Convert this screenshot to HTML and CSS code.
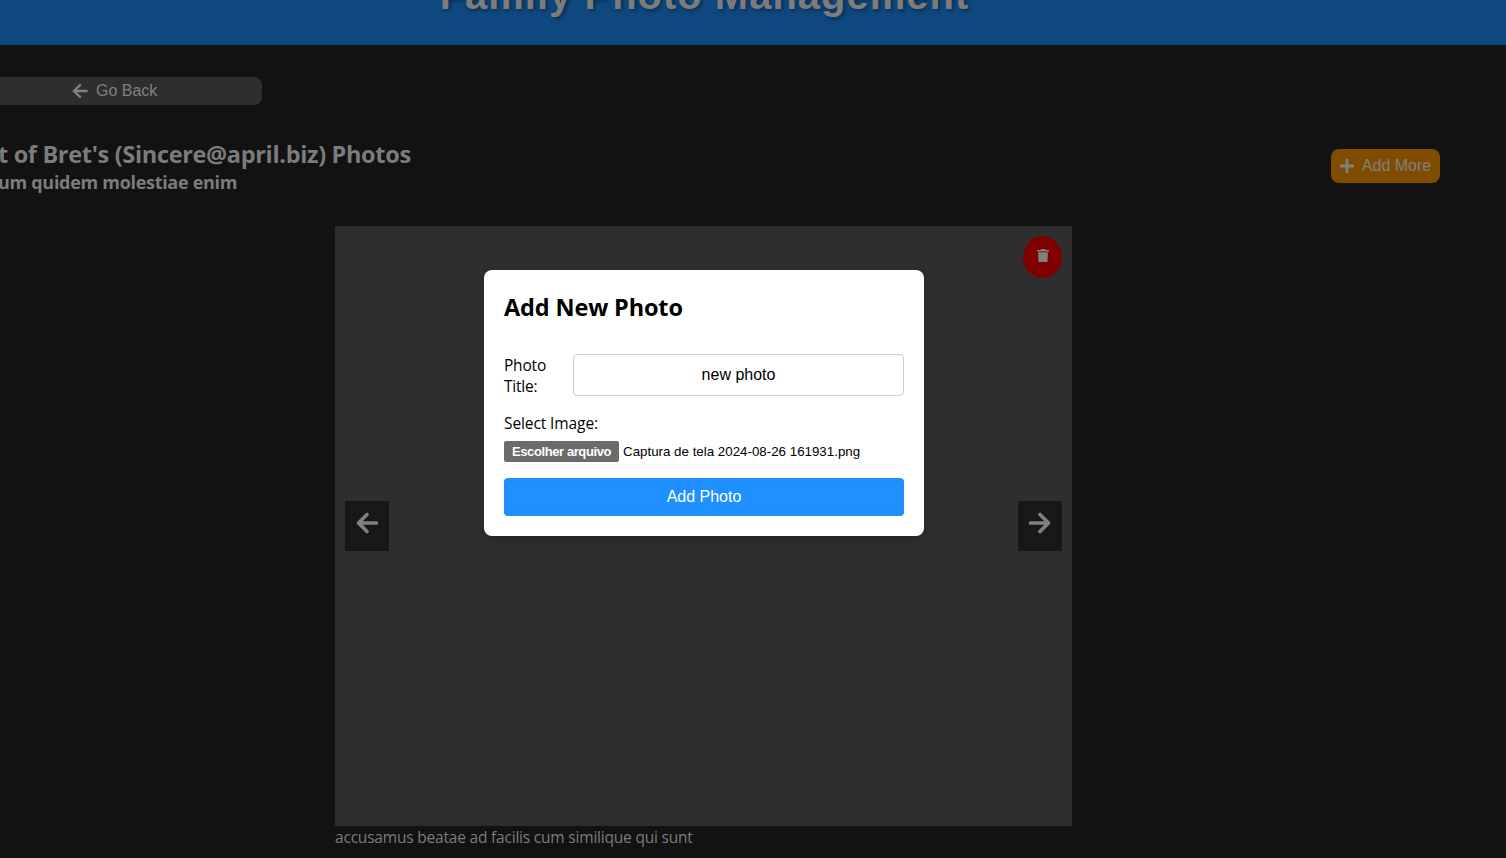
FILE: index.html
```html
<!DOCTYPE html>
<html lang="en">
<head>
<meta charset="utf-8">
<title>Family Photo Management</title>
<link rel="stylesheet" href="styles.css">
</head>
<body>
<header class="site-header"><h1 class="site-title">Family Photo Management</h1></header>
<main class="page">
  <button class="go-back">
    <svg class="back-icon" viewBox="0 0 16 14"><path d="M8 1.2 2 7l6 5.8M2 7h12.6"/></svg>
    <span>Go Back</span>
  </button>
  <div class="album-row">
    <div class="album-info">
      <h2 class="album-owner">t of Bret's (Sincere@april.biz) Photos</h2>
      <h3 class="album-name">um quidem molestiae enim</h3>
    </div>
    <button class="add-more">
      <svg class="plus-icon" viewBox="0 0 14 14"><path d="M7 .6v12.8M.6 7h12.8"/></svg>
      <span>Add More</span>
    </button>
  </div>
  <figure class="viewer">
    <div class="photo">
      <button class="delete"><svg class="trash-icon" viewBox="0 0 12 13"><path d="M4 0h4l.6 1H12v1.5H0V1h3.4zM1 3.2h10l-.6 9.8H1.6z"/></svg></button>
      <div class="arrows">
        <button class="arrow"><svg class="arrow-icon" viewBox="0 0 22 22"><path d="M11 2.5 2.5 11l8.500 8.500M2.500 11h18"/></svg></button>
        <button class="arrow"><svg class="arrow-icon" viewBox="0 0 22 22"><path d="m11 2.500 8.500 8.500-8.500 8.500M19.500 11h-18"/></svg></button>
      </div>
    </div>
    <figcaption class="caption">accusamus beatae ad facilis cum similique qui sunt</figcaption>
  </figure>
</main>
<div class="overlay">
  <form class="modal">
    <h2 class="modal-title">Add New Photo</h2>
    <div class="title-row">
      <label class="label" for="title">Photo<br>Title:</label>
      <input class="title-input" id="title" type="text" value="new photo">
    </div>
    <div class="label select-label">Select Image:</div>
    <div class="file-row"><span class="file-button">Escolher arquivo</span><span class="file-name">Captura de tela 2024-08-26 161931.png</span></div>
    <button class="submit" type="button">Add Photo</button>
  </form>
</div>
</body>
</html>
```

FILE: styles.css
```css
* { box-sizing: border-box; }
html { overflow: hidden; }
body {
  margin: 0;
  height: 858px;
  overflow: hidden;
  background: #121212;
  color: #7c7c7c;
  font: 16px/21px "Segoe UI", "Open Sans", sans-serif;
}
h1, h2, h3, figure { margin: 0; }
button { border: 0; padding: 0; font: 16px/18px "Liberation Sans", Arial, sans-serif; color: #808080; }
svg { display: block; fill: none; stroke: currentColor; }
.site-header {
  height: 45px;
  display: flex;
  justify-content: center;
  align-items: flex-end;
  padding: 0 97px 27px 0;
  background: #0f4880;
}
.site-title {
  font: bold 40px/46px "Liberation Sans", Arial, sans-serif;
  letter-spacing: 1px;
  text-shadow: 2px 2px 4px rgba(0, 0, 0, .4);
  white-space: nowrap;
}
.page { padding-top: 32px; }
.go-back {
  width: 262px;
  height: 28px;
  display: flex;
  align-items: center;
  gap: 8px;
  padding: 0 0 0 72px;
  border-radius: 0 8px 8px 0;
  background: #2e2e2e;
}
.back-icon { width: 16px; height: 14px; stroke-width: 2.4; stroke-linecap: round; }
.album-row {
  height: 121px;
  display: flex;
  justify-content: space-between;
  align-items: flex-start;
  padding: 33px 66px 0 0;
}
.album-info { margin-left: -2px; }
.album-owner { font-size: 23.5px; line-height: 32px; letter-spacing: -.33px; white-space: nowrap; }
.album-name { font-size: 18px; line-height: 24px; letter-spacing: -.3px; white-space: nowrap; }
.add-more {
  width: 109px;
  height: 34px;
  margin-top: 11px;
  display: flex;
  align-items: center;
  justify-content: center;
  gap: 8px;
  border-radius: 8px;
  background: #804d00;
  white-space: nowrap;
}
.plus-icon { width: 14px; height: 14px; stroke-width: 2.8; stroke-linecap: round; }
.viewer { width: 737px; margin-left: 335px; }
.photo {
  height: 600px;
  padding: 10px;
  display: flex;
  flex-direction: column;
  align-items: flex-end;
  background: #2e2e2e;
}
.delete {
  width: 39px;
  height: 42px;
  display: flex;
  justify-content: center;
  padding-top: 13px;
  border-radius: 50%;
  background: #800000;
}
.trash-icon { width: 12px; height: 13px; fill: currentColor; stroke: none; }
.arrows { width: 100%; margin-top: 223px; display: flex; justify-content: space-between; }
.arrow { width: 44px; height: 50px; display: flex; justify-content: center; padding-top: 11px; background: #171717; }
.arrow-icon { width: 22px; height: 22px; stroke-width: 3.6; stroke-linecap: round; stroke-linejoin: round; }
.caption { padding-top: 1px; font-size: 15.5px; letter-spacing: -.2px; white-space: nowrap; }
.overlay { position: absolute; top: 270px; left: 484px; }
.modal {
  width: 440px;
  height: 266px;
  padding: 20px;
  border-radius: 8px;
  background: #fff;
  color: #000;
  box-shadow: 0 4px 8px rgba(0, 0, 0, .2);
}
.modal-title { height: 64px; padding-top: 1px; font-size: 23.5px; line-height: 32px; letter-spacing: -.15px; }
.title-row { height: 42px; display: flex; justify-content: space-between; align-items: center; }
.label { font-size: 15.5px; letter-spacing: -.2px; padding-top: 2px; }
.title-input {
  width: 331px;
  height: 42px;
  padding: 0 10px;
  border: 1px solid #ccc;
  border-radius: 4px;
  text-align: center;
  font: 16px "Liberation Sans", Arial, sans-serif;
}
.select-label { margin-top: 15px; letter-spacing: -.1px; }
.file-row {
  height: 21px;
  margin-top: 7px;
  display: flex;
  align-items: center;
  gap: 4px;
  font: 13.333px/15px "Liberation Sans", Arial, sans-serif;
  white-space: nowrap;
}
.file-button {
  width: 115px;
  line-height: 21px;
  text-align: center;
  border-radius: 2px;
  background: #6b6b6b;
  color: #fff;
  font-weight: bold;
  font-size: 13px;
  letter-spacing: -.4px;
}
.submit {
  width: 400px;
  height: 38px;
  margin-top: 16px;
  border-radius: 4px;
  background: #1e90ff;
  color: #fff;
}
```
